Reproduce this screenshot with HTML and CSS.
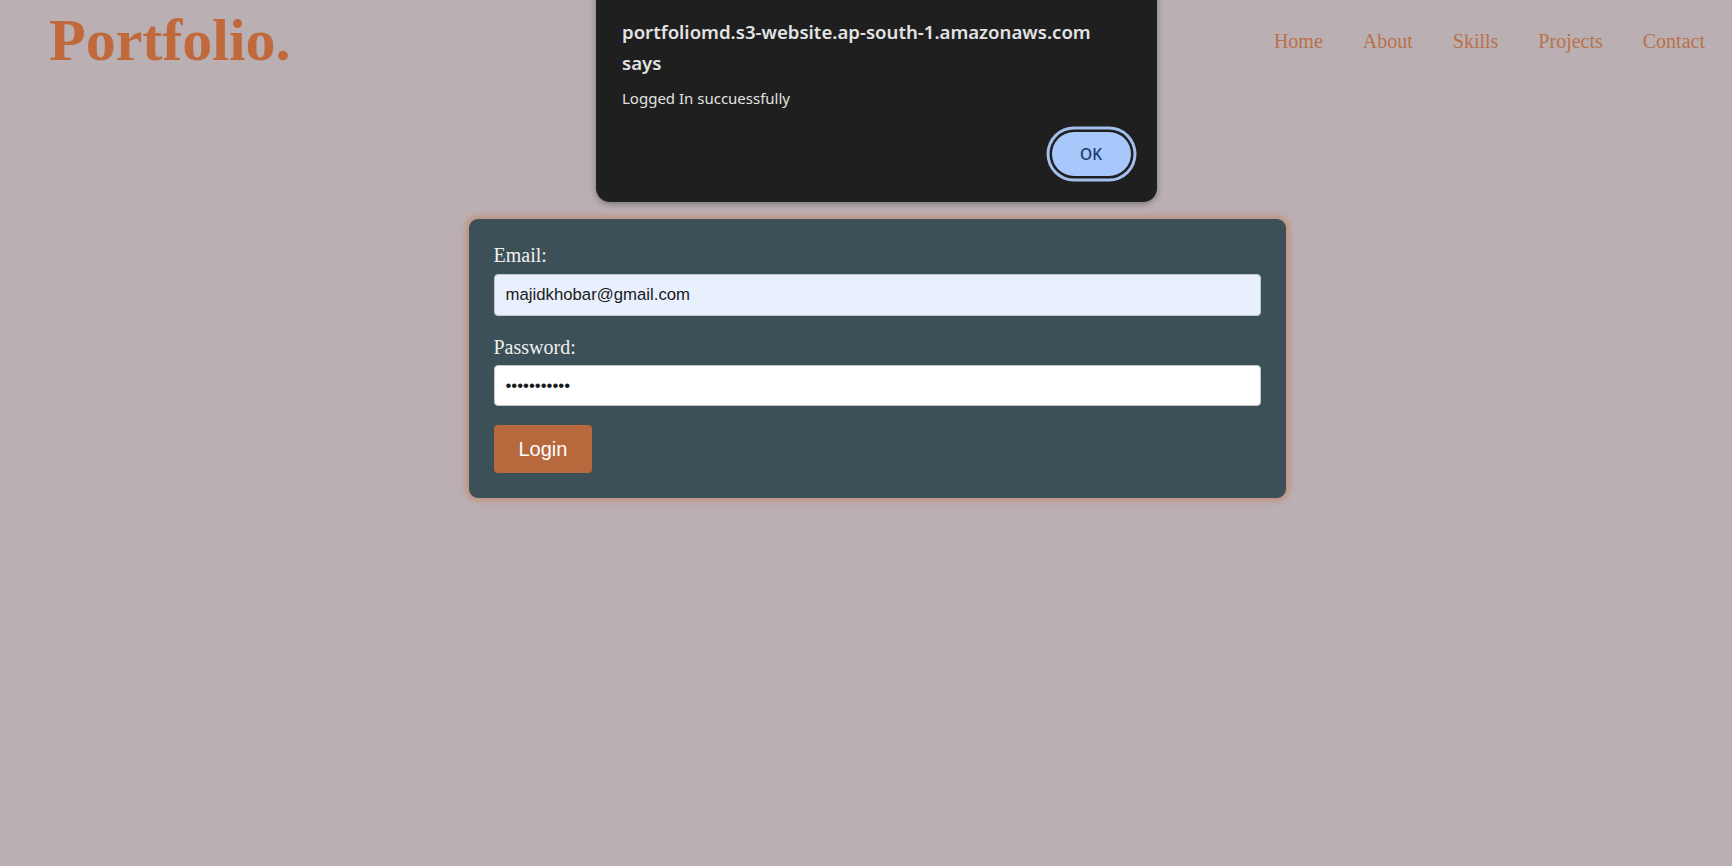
FILE: index.html
```html
<!DOCTYPE html>
<html lang="en">
<head>
<meta charset="utf-8">
<title>Portfolio</title>
<link rel="stylesheet" href="styles.css">
</head>
<body>
<header class="site-header">
  <h1 class="brand">Portfolio.</h1>
  <nav class="nav">
    <a href="#" class="nav-link">Home</a>
    <a href="#" class="nav-link">About</a>
    <a href="#" class="nav-link">Skills</a>
    <a href="#" class="nav-link">Projects</a>
    <a href="#" class="nav-link">Contact</a>
  </nav>
</header>

<main class="main">
  <form class="login-card">
    <label class="field-label" for="email">Email:</label>
    <input class="field-input autofill" id="email" type="email" value="majidkhobar@gmail.com">
    <label class="field-label field-label-gap" for="password">Password:</label>
    <input class="field-input" id="password" type="password" value="majidkhobar">
    <button type="button" class="login-btn">Login</button>
  </form>
</main>

<div class="alert">
  <div class="alert-title">portfoliomd.s3-website.ap-south-1.amazonaws.com<br>says</div>
  <div class="alert-msg">Logged In succuessfully</div>
  <div class="alert-actions">
    <button type="button" class="alert-ok">OK</button>
  </div>
</div>
</body>
</html>
```

FILE: styles.css
```css
html, body {
  margin: 0;
  padding: 0;
}

body {
  background: #bab0b3;
  min-height: 866px;
  font-family: "Liberation Serif", "Times New Roman", serif;
  position: relative;
  overflow: hidden;
}

.site-header {
  display: flex;
  justify-content: space-between;
  align-items: flex-start;
  padding: 0 27px 0 49px;
}

.brand {
  margin: 6px 0 0;
  font-family: "Liberation Serif", "Times New Roman", serif;
  font-weight: bold;
  font-size: 60px;
  line-height: normal;
  color: #c0693c;
}

.nav {
  display: flex;
  gap: 40px;
  margin-top: 30px;
}

.nav-link {
  font-family: "Liberation Serif", "Times New Roman", serif;
  font-size: 20px;
  line-height: normal;
  color: #b9714a;
  text-decoration: none;
}

.main {
  display: flex;
  justify-content: center;
  padding: 144px 0 0 22px;
}

.login-card {
  width: 817px;
  box-sizing: border-box;
  padding: 25px 25px 25px;
  background: #3c5157;
  border-radius: 9px;
  box-shadow: 0 0 6px 3px rgba(198, 122, 86, 0.6);
  display: flex;
  flex-direction: column;
  align-items: flex-start;
}

.field-label {
  font-family: "Liberation Serif", "Times New Roman", serif;
  font-size: 20px;
  line-height: 23px;
  color: #f2f0ee;
  margin-bottom: 7px;
}

.field-label-gap {
  margin-top: 20px;
  margin-bottom: 6px;
}

.field-input {
  width: 100%;
  box-sizing: border-box;
  height: 41px;
  padding: 0 11px;
  border: 1px solid #c4c4c4;
  border-radius: 4px;
  background: #ffffff;
  font-family: "Liberation Sans", Arial, sans-serif;
  font-size: 16.75px;
  color: #1a1a1a;
  outline: none;
}

.field-input.autofill {
  background: #e8f0fe;
  height: 42px;
}

.login-btn {
  margin-top: 19px;
  height: 48px;
  padding: 0 25px;
  border: none;
  border-radius: 4px;
  background: #b8683d;
  color: #ffffff;
  font-family: "Liberation Sans", Arial, sans-serif;
  font-size: 20px;
}

.alert {
  position: absolute;
  left: 596px;
  top: -14px;
  width: 561px;
  box-sizing: border-box;
  padding: 30px 21px 21px 26px;
  background: #1f1f1f;
  border-radius: 14px;
  box-shadow: 0 2px 6px rgba(0, 0, 0, 0.35);
  font-family: "Noto Sans", "Open Sans", sans-serif;
}

.alert-title {
  font-size: 18.6px;
  font-weight: 600;
  line-height: 31px;
  color: #e3e3e3;
}

.alert-msg {
  margin-top: 10px;
  font-size: 15px;
  line-height: 20px;
  color: #e3e3e3;
}

.alert-actions {
  display: flex;
  justify-content: flex-end;
  margin-top: 18px;
}

.alert-ok {
  width: 79px;
  height: 44px;
  margin: 5.5px;
  border: none;
  border-radius: 999px;
  background: #a8c7fa;
  color: #1b3a6b;
  font-family: "Noto Sans", "Open Sans", sans-serif;
  font-size: 15.5px;
  font-weight: 500;
  box-shadow: 0 0 0 2.5px #1f1f1f, 0 0 0 5.5px #a3c0ec;
}
```
